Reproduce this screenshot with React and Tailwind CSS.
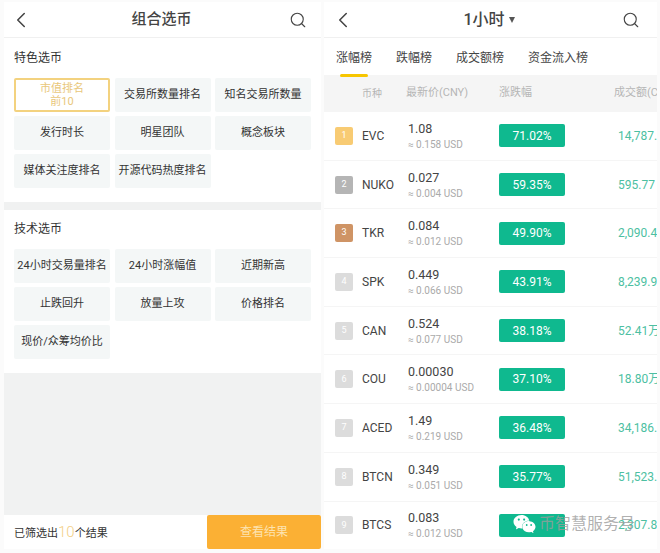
import { ChevronLeft, Search } from 'lucide-react'
import { SiWechat } from 'react-icons/si'

const FEATURED = ['交易所数量排名', '知名交易所数量', '发行时长', '明星团队', '概念板块', '媒体关注度排名', '开源代码热度排名']
const TECHNICAL = ['24小时交易量排名', '24小时涨幅值', '近期新高', '止跌回升', '放量上攻', '价格排名', '现价/众筹均价比']
const TABS = ['涨幅榜', '跌幅榜', '成交额榜', '资金流入榜']

const COINS = [
  { name: 'EVC', price: '1.08', usd: '≈ 0.158 USD', pct: '71.02%', vol: '14,787.', rank: 'bg-[#f8cb73]' },
  { name: 'NUKO', price: '0.027', usd: '≈ 0.004 USD', pct: '59.35%', vol: '595.77', rank: 'bg-[#b5b5b5]' },
  { name: 'TKR', price: '0.084', usd: '≈ 0.012 USD', pct: '49.90%', vol: '2,090.4', rank: 'bg-[#cf9465]' },
  { name: 'SPK', price: '0.449', usd: '≈ 0.066 USD', pct: '43.91%', vol: '8,239.9', rank: 'bg-[#dcdcdc]' },
  { name: 'CAN', price: '0.524', usd: '≈ 0.077 USD', pct: '38.18%', vol: '52.41万', rank: 'bg-[#dcdcdc]' },
  { name: 'COU', price: '0.00030', usd: '≈ 0.00004 USD', pct: '37.10%', vol: '18.80万', rank: 'bg-[#dcdcdc]' },
  { name: 'ACED', price: '1.49', usd: '≈ 0.219 USD', pct: '36.48%', vol: '34,186.', rank: 'bg-[#dcdcdc]' },
  { name: 'BTCN', price: '0.349', usd: '≈ 0.051 USD', pct: '35.77%', vol: '51,523.', rank: 'bg-[#dcdcdc]' },
  { name: 'BTCS', price: '0.083', usd: '≈ 0.012 USD', pct: '', vol: '2,307.8', rank: 'bg-[#dcdcdc]' },
]

function Header({ children, className }) {
  return (
    <div className={`flex h-[36px] shrink-0 items-center justify-between border-b border-[#f0f0f0] ${className}`}>
      <ChevronLeft className="h-[26px] w-[26px] text-[#444]" strokeWidth={1.4} />
      {children}
      <Search className="h-[18px] w-[18px] text-[#444]" strokeWidth={1.5} />
    </div>
  )
}

function Chip({ label }) {
  return (
    <div className="flex h-[34px] items-center justify-center whitespace-nowrap rounded-[2px] bg-[#f4f7f7] pt-[1px] text-[11px] text-[#333]">
      {label}
    </div>
  )
}

function Section({ title, children }) {
  return (
    <div className="px-[10px]">
      <div className="h-[18px] text-[12px] leading-[18px] text-[#333]">{title}</div>
      <div className="mt-[11px] grid grid-cols-[96px_96px_96px] gap-x-[4.5px] gap-y-[4px]">{children}</div>
    </div>
  )
}

function CoinRow({ coin, index }) {
  return (
    <div className="flex h-[48.7px] shrink-0 items-center border-b border-[#f5f5f5]">
      <div className={`ml-[11px] flex h-[18px] w-[18px] shrink-0 items-center justify-center rounded-[2px] text-[9px] text-white ${coin.rank}`}>
        {index + 1}
      </div>
      <div className="ml-[9px] w-[46px] shrink-0 text-[12px] text-[#444]">{coin.name}</div>
      <div className="w-[91px] shrink-0 whitespace-nowrap">
        <div className="text-[12.5px] leading-[18px] text-[#444]">{coin.price}</div>
        <div className="text-[10px] leading-[14px] text-[#aaa]">{coin.usd}</div>
      </div>
      <div className="flex h-[23px] w-[66px] shrink-0 items-center justify-center rounded-[2px] bg-[#0fb98f] text-[12px] text-white">
        {coin.pct}
      </div>
      <div className="ml-[53px] shrink-0 whitespace-nowrap text-[12px] text-[#4dbfa2]">{coin.vol}</div>
    </div>
  )
}

export default function App() {
  return (
    <div
      className="relative flex h-[553px] w-[660px] overflow-hidden bg-[#fbfbfb] pt-[2px]"
      style={{ fontFamily: 'Roboto, "Noto Sans CJK SC", sans-serif' }}
    >
      {/* left phone screen */}
      <div className="ml-[4px] flex h-[547px] w-[317px] flex-col bg-white">
        <Header className="pl-[4px] pr-[14px]">
          <div className="text-[15px] font-medium text-[#444]">组合选币</div>
        </Header>
        <div className="pt-[11px]">
          <Section title="特色选币">
            <div className="flex h-[34px] flex-col items-center justify-center rounded-[2px] border-2 border-[#f3d27f] bg-white text-[11px] leading-[13px] text-[#e9c77a]">
              <span>市值排名</span>
              <span>前10</span>
            </div>
            {FEATURED.map(label => <Chip key={label} label={label} />)}
          </Section>
        </div>
        <div className="mt-[14px] h-[8px] shrink-0 bg-[#f0f1f1]" />
        <div className="pt-[10px]">
          <Section title="技术选币">
            {TECHNICAL.map(label => <Chip key={label} label={label} />)}
          </Section>
        </div>
        <div className="mt-[14px] flex-1 bg-[#f1f2f2]" />
        <div className="flex h-[34px] shrink-0 items-center justify-between">
          <div className="pl-[10px] text-[11px] text-[#333]">
            已筛选出<span className="text-[15px] font-light text-[#f3cf86]">10</span>个结果
          </div>
          <div className="flex h-full w-[114px] items-center justify-center rounded-[2px] bg-[#fbb034] text-[12px] text-[#fde3b0]">
            查看结果
          </div>
        </div>
      </div>

      {/* right phone screen */}
      <div className="ml-[3px] flex h-[547px] w-[333px] flex-col overflow-hidden bg-white">
        <Header className="pl-[6px] pr-[17px]">
          <div className="flex items-center gap-[4px] text-[16px] font-medium text-[#444]">
            1小时
            <span className="h-0 w-0 border-x-[3.5px] border-t-[6px] border-x-transparent border-t-[#555]" />
          </div>
        </Header>
        <div className="flex h-[37px] shrink-0 items-center gap-[24px] pl-[12px] pt-[2px] text-[12px] text-[#444]">
          {TABS.map((tab, i) => (
            <div key={tab} className="relative">
              {tab}
              {i === 0 && <div className="absolute -bottom-[10px] left-[4px] h-[3px] w-[28px] rounded-full bg-[#f7c600]" />}
            </div>
          ))}
        </div>
        <div className="flex h-[37px] shrink-0 items-center whitespace-nowrap bg-[#f5f5f5] text-[11px] text-[#b5b5b5]">
          <div className="ml-[38px] w-[44px] shrink-0 text-[10px]">币种</div>
          <div className="w-[93px] shrink-0">最新价(CNY)</div>
          <div className="w-[115px] shrink-0">涨跌幅</div>
          <div className="shrink-0">成交额(CNY)</div>
        </div>
        {COINS.map((coin, i) => <CoinRow key={coin.name} coin={coin} index={i} />)}
      </div>

      {/* wechat watermark */}
      <div className="absolute left-[511px] top-[512px] flex items-center gap-[1px] whitespace-nowrap text-[16px] text-[#9b9b9b]/80">
        <SiWechat className="h-[22px] w-[27px] text-white" />
        <span>币智慧服务号</span>
      </div>
    </div>
  )
}
